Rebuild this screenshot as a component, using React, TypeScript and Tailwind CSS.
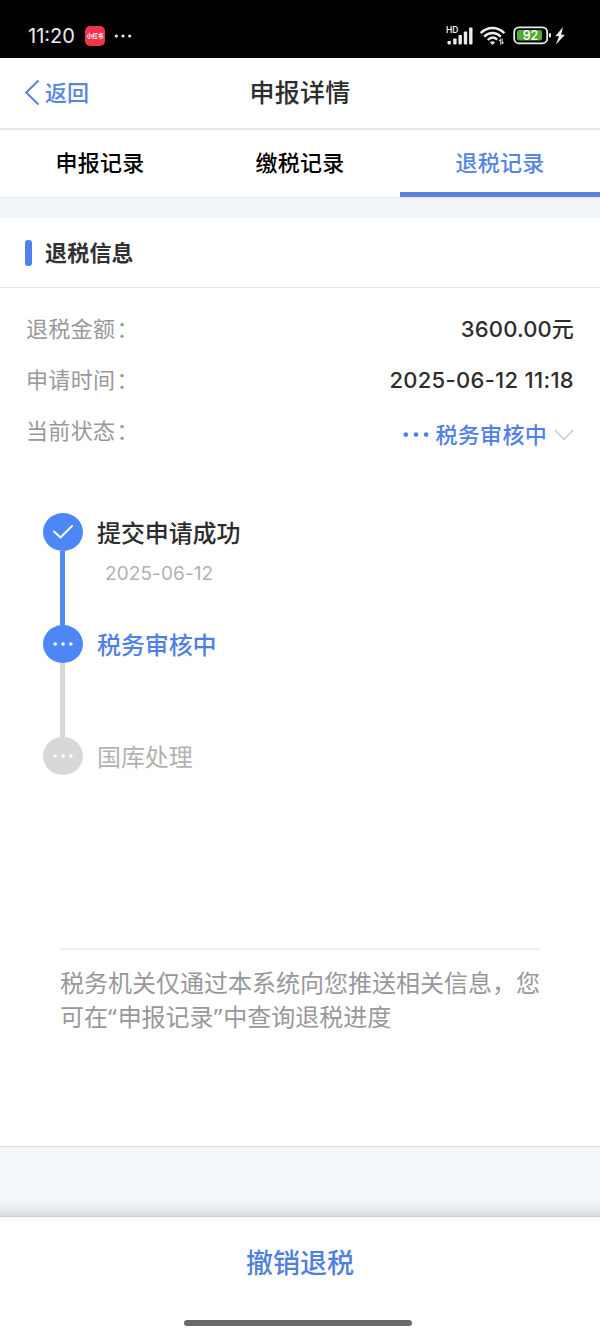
import type { ReactNode } from "react";

const steps: { title: string; date?: string; state: "done" | "current" | "pending" }[] = [
  { title: "提交申请成功", date: "2025-06-12", state: "done" },
  { title: "税务审核中", state: "current" },
  { title: "国库处理", state: "pending" },
];

function StatusBar() {
  return (
    <div className="flex h-[58px] items-center bg-black pt-[14px] text-[#ececec]">
      <span className="ml-[28px] w-[57px] text-[20px] leading-[44px]">11:20</span>
      <span className="flex h-[20px] w-[20px] items-center justify-center rounded-[5px] bg-[#f5334a]">
        <span className="scale-[0.55] whitespace-nowrap text-[10px] font-bold leading-none text-white">小红书</span>
      </span>
      <svg className="ml-[9px]" width="18" height="6" viewBox="0 0 18 6" fill="#ececec">
        <circle cx="2.3" cy="3" r="1.6" />
        <circle cx="9" cy="3" r="1.6" />
        <circle cx="15.7" cy="3" r="1.6" />
      </svg>
      <svg className="ml-auto mr-[32px]" width="122" height="24" viewBox="0 0 122 24" fill="#ececec">
        <text x="0" y="8.5" fontSize="8.5" fontWeight="600" fontFamily="Inter, sans-serif">HD</text>
        <rect x="1.5" y="17" width="3.4" height="3.4" rx=".8" />
        <rect x="7.2" y="14.5" width="3.4" height="5.9" rx=".8" />
        <rect x="12.5" y="11" width="3.4" height="9.4" rx=".8" />
        <rect x="17.8" y="7.5" width="3.4" height="12.9" rx=".8" />
        <rect x="23.1" y="3.5" width="3.4" height="16.9" rx=".8" />
        <g fill="none" stroke="#ececec" strokeWidth="2.4">
          <path d="M34.6 9.2C41.5 2.3 51.5 2.3 58.4 9.2" />
          <path d="M38.2 12.6C43 7.8 50 7.8 54.8 12.6" />
          <path d="M41.8 16C44.8 13 48.4 13 51.2 15.6" />
        </g>
        <path d="M43.9 18.3Q46.5 16.4 49.1 18.3L46.5 21Z" />
        <path d="M54 20.500v-3.600h-1.400l2.200-2.600v6.200zM56.600 14.600v3.600h1.600l-2.600 2.900v-6.500z" />
        <rect x="68.2" y="3.3" width="33" height="16" rx="4.8" fill="none" stroke="#ececec" strokeWidth="1.8" />
        <rect x="71" y="6" width="25" height="10.6" rx="2" fill="#4fae32" />
        <rect x="103" y="9" width="2" height="4.6" rx="1" />
        <text x="84.5" y="15.8" textAnchor="middle" fontSize="12.5" fontWeight="500" fill="#fff" fontFamily="Inter, sans-serif">92</text>
        <path d="M117 3L109.200 12.200H113L109.800 20.500L119 10.800H115.200Z" />
      </svg>
    </div>
  );
}

function Dots({ className }: { className: string }) {
  return (
    <svg className={className} viewBox="0 0 20 4" fill="currentColor">
      <circle cx="2.2" cy="2" r="1.8" />
      <circle cx="10" cy="2" r="1.8" />
      <circle cx="17.8" cy="2" r="1.8" />
    </svg>
  );
}

function Quote({ children }: { children: string }) {
  return <span className="font-['Noto_Sans',sans-serif] text-[24px] tracking-[1px]">{children}</span>;
}

function Row({ label, children }: { label: string; children: ReactNode }) {
  return (
    <div className="flex h-[51px] items-center justify-between">
      <span className="text-[22px] tracking-[0.35px] text-[#98989c]">
        {label}
        <span className="ml-[1px]">：</span>
      </span>
      {children}
    </div>
  );
}

export default function App() {
  return (
    <div className="flex h-[1335px] w-[600px] flex-col overflow-hidden bg-white font-['Inter','Noto_Sans_CJK_SC',sans-serif] text-[#2d2d2d]">
      <StatusBar />
      <header className="grid h-[72px] grid-cols-[200px_200px_200px] items-center border-b-2 border-[#e6e7e9]">
        <div className="flex items-center text-[#5685df]">
          <svg className="ml-[24px]" width="17" height="28" viewBox="0 0 17 28" fill="none" stroke="currentColor" strokeWidth="2">
            <path d="M14.5 1.5L2.2 13.5L14.5 25.5" />
          </svg>
          <span className="ml-[4px] pt-[1px] text-[22px] font-medium">返回</span>
        </div>
        <h1 className="whitespace-nowrap pt-[2px] text-center text-[25px] font-medium tracking-[0.3px]">申报详情</h1>
      </header>
      <nav className="grid h-[68px] grid-cols-3 border-b border-[#e8ecee] text-center text-[22px] font-medium leading-[58px] tracking-[0.25px] text-black">
        <span className="pt-[4px]">申报记录</span>
        <span className="pt-[4px]">缴税记录</span>
        <span className="border-b-[5px] border-[#5b82e2] pt-[4px] text-[#5685df]">退税记录</span>
      </nav>
      <div className="h-[20px] bg-[#f3f6f9]" />
      <div className="flex h-[70px] items-center border-b border-[#e4e5e6]">
        <span className="ml-[25px] h-[26px] w-[7px] rounded-[3px] bg-[#507ff0]" />
        <h2 className="ml-[13px] pt-[1px] text-[22px] font-bold tracking-[0.2px] text-[#2f3234]">退税信息</h2>
      </div>
      <section className="px-[26px] pt-[16px]">
        <Row label="退税金额">
          <span className="text-[22px] font-medium tracking-[0.15px]">3600.00元</span>
        </Row>
        <Row label="申请时间">
          <span className="text-[22px] font-medium tracking-[0.3px]">2025-06-12 11:18</span>
        </Row>
        <Row label="当前状态">
          <span className="flex items-center pt-[7px] text-[22px] font-medium tracking-[0.3px] text-[#4f80e8]">
            <Dots className="mr-[6px] w-[26px]" />
            税务审核中
            <svg className="ml-[7px]" width="20" height="12" viewBox="0 0 20 12" fill="none" stroke="#c9c9cd" strokeWidth="1.5">
              <path d="M1 1L10 10.5L19 1" />
            </svg>
          </span>
        </Row>
      </section>
      <ol className="mt-[56px] h-[435px] pl-[43px]">
        {steps.map((step, i) => (
          <li key={step.title} className="flex h-[112px] gap-[14px]">
            <div className="flex w-[40px] flex-col items-center">
              <span
                className={`flex h-[38px] w-[40px] shrink-0 items-center justify-center rounded-[50%] text-white ${step.state === "pending" ? "bg-[#d8d8d8]" : "bg-[#4d86f7]"}`}
              >
                {step.state === "done" ? (
                  <svg width="20" height="14" viewBox="0 0 20 14" fill="none" stroke="currentColor" strokeWidth="2" strokeLinecap="round" strokeLinejoin="round">
                    <path d="M1 6.5L7.5 12.5L19 1" />
                  </svg>
                ) : (
                  <Dots className="w-[20px]" />
                )}
              </span>
              {i < steps.length - 1 && (
                <span className={`mr-[2px] w-[5px] flex-1 ${step.state === "done" ? "bg-[#5288f0]" : "bg-[#d8d8d8]"}`} />
              )}
            </div>
            <div className="pt-[1px]">
              <p
                className={`text-[24px] leading-[40px] tracking-[-0.1px] ${step.state === "done" ? "font-medium text-[#2d2d2d]" : step.state === "current" ? "font-medium text-[#4f80e8]" : "text-[#b2b2b2]"}`}
              >
                {step.title}
              </p>
              {step.date && <p className="pl-[8px] text-[19px] leading-[40px] tracking-[0.1px] text-[#b2b2b2]">{step.date}</p>}
            </div>
          </li>
        ))}
      </ol>
      <div className="mx-[60px] h-[198px] border-t-2 border-[#eeeeee] pt-[17px] text-[24px] leading-[34px] text-[#98989c]">
        <p className="h-[33px] whitespace-nowrap">税务机关仅通过本系统向您推送相关信息，您</p>
        <p className="whitespace-nowrap">
          可在<Quote>“</Quote>申报记录<Quote>”</Quote>中查询退税进度
        </p>
      </div>
      <div className="h-[71px] border-b border-t border-b-[#c9cdd0] border-t-[#dcdfe1] bg-[linear-gradient(to_bottom,#f3f7fa_0,#f3f7fa_52px,#eaeef1_60px,#d6dadd_70px)]" />
      <footer className="flex flex-1 flex-col items-center">
        <button className="h-[91px] pt-[1px] text-[27px] font-medium leading-[91px] text-[#4f80df]">撤销退税</button>
        <span className="mr-[4px] mt-[12px] h-[6px] w-[228px] rounded-full bg-[#696969]" />
      </footer>
    </div>
  );
}
